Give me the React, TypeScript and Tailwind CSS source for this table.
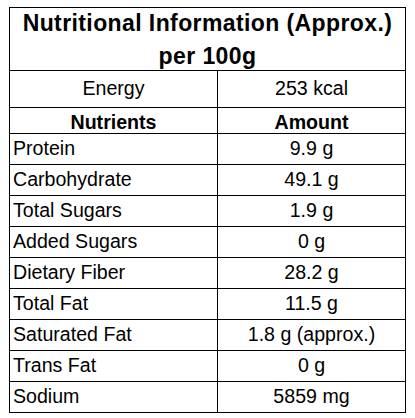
import React from "react";

const rows: [string, string][] = [
  ["Protein", "9.9 g"],
  ["Carbohydrate", "49.1 g"],
  ["Total Sugars", "1.9 g"],
  ["Added Sugars", "0 g"],
  ["Dietary Fiber", "28.2 g"],
  ["Total Fat", "11.5 g"],
  ["Saturated Fat", "1.8 g (approx.)"],
  ["Trans Fat", "0 g"],
  ["Sodium", "5859 mg"],
];

const App: React.FC = () => {
  return (
    <div
      className="w-[415px] h-[418px] bg-white text-black pt-[7px] pl-[9px]"
      style={{ fontFamily: '"Liberation Sans", Arial, sans-serif' }}
    >
      <div className="w-[397px] border border-black">
        {/* Title */}
        <div className="h-[63px] flex flex-col items-center justify-center border-b border-black text-[23px] font-bold leading-[33px] tracking-[0.4px] pt-[2px]">
          <div>Nutritional Information (Approx.)</div>
          <div>per 100g</div>
        </div>

        {/* Energy */}
        <div className="grid grid-cols-[208px_1fr] h-[37px] border-b border-black text-[19.6px]">
          <div className="flex items-center justify-center border-r border-black">Energy</div>
          <div className="flex items-center justify-center">253 kcal</div>
        </div>

        {/* Header */}
        <div className="grid grid-cols-[208px_1fr] h-[26px] border-b border-black text-[19.6px] font-bold">
          <div className="flex items-center justify-center border-r border-black">Nutrients</div>
          <div className="flex items-center justify-center">Amount</div>
        </div>

        {rows.map(([name, amount], i) => (
          <div
            key={name}
            className={
              i < rows.length - 1
                ? "grid grid-cols-[208px_1fr] h-[31px] border-b border-black text-[19.6px]"
                : "grid grid-cols-[208px_1fr] h-[30px] text-[19.6px]"
            }
          >
            <div className="flex items-center pl-[3px] border-r border-black">{name}</div>
            <div className="flex items-center justify-center">{amount}</div>
          </div>
        ))}
      </div>
    </div>
  );
};

export default App;
